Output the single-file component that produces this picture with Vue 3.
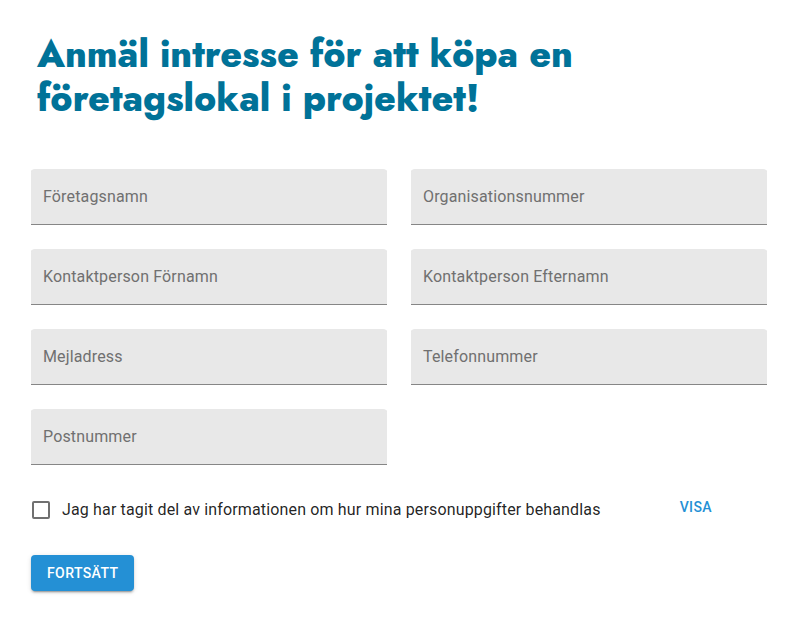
<template>
  <main class="page">
    <h1 class="title">Anmäl intresse för att köpa en företagslokal i projektet!</h1>

    <form class="form" @submit.prevent>
      <div class="fields">
        <div v-for="field in fields" :key="field.name" class="field">
          <input
            :id="field.name"
            v-model="form[field.name]"
            class="input"
            :type="field.type"
            placeholder=" "
          />
          <label class="label" :for="field.name">{{ field.label }}</label>
        </div>
      </div>

      <div class="consent">
        <label class="check">
          <input v-model="accepted" class="checkbox" type="checkbox" />
          <span>Jag har tagit del av informationen om hur mina personuppgifter behandlas</span>
        </label>
        <button class="show" type="button">Visa</button>
      </div>

      <button class="submit" type="submit">Fortsätt</button>
    </form>
  </main>
</template>

<script setup>
import { reactive, ref } from 'vue'

const fields = [
  { name: 'company', label: 'Företagsnamn', type: 'text' },
  { name: 'orgNumber', label: 'Organisationsnummer', type: 'text' },
  { name: 'firstName', label: 'Kontaktperson Förnamn', type: 'text' },
  { name: 'lastName', label: 'Kontaktperson Efternamn', type: 'text' },
  { name: 'email', label: 'Mejladress', type: 'email' },
  { name: 'phone', label: 'Telefonnummer', type: 'tel' },
  { name: 'zip', label: 'Postnummer', type: 'text' }
]

const form = reactive(Object.fromEntries(fields.map((f) => [f.name, ''])))
const accepted = ref(false)
</script>

<style>
body {
  margin: 0;
  background: #fff;
}
</style>

<style scoped>
.page {
  padding: 32px 29px 30px 31px;
  font-family: Roboto, sans-serif;
  font-size: 16px;
  letter-spacing: 0.15px;
  color: rgba(0, 0, 0, 0.87);
}
.title {
  max-width: 600px;
  margin: 0 0 49px;
  padding-left: 6px;
  font-family: Futura, 'Jost', Lato, sans-serif;
  font-size: 37px;
  line-height: 44px;
  font-weight: 800;
  font-variant-ligatures: none;
  letter-spacing: normal;
  color: #007298;
}
.fields {
  display: grid;
  grid-template-columns: 1fr 1fr;
  gap: 24px;
}
.field {
  position: relative;
  display: flex;
}
.input {
  box-sizing: border-box;
  width: 100%;
  height: 56px;
  padding: 20px 12px 4px;
  border: 0;
  border-radius: 4px 4px 0 0;
  background: #e8e8e8;
  box-shadow: inset 0 -1px #868686;
  font: inherit;
  color: inherit;
  outline: none;
}
.label {
  position: absolute;
  top: 16px;
  left: 12px;
  line-height: 24px;
  color: #707070;
  pointer-events: none;
  transform-origin: top left;
  transition: transform 0.2s;
}
.input:focus {
  box-shadow: inset 0 -2px #2490d5;
}
.input:focus + .label,
.input:not(:placeholder-shown) + .label {
  transform: translateY(-10px) scale(0.75);
}
.consent {
  display: flex;
  align-items: flex-start;
  justify-content: space-between;
  margin-top: 24px;
  padding-right: 47px;
}
.check {
  display: flex;
  align-items: center;
  gap: 12px;
  min-height: 42px;
  line-height: 24px;
  cursor: pointer;
}
.checkbox {
  appearance: none;
  box-sizing: border-box;
  width: 18px;
  height: 18px;
  margin: 0 0 0 1px;
  border: 2px solid #707070;
  border-radius: 2px;
}
.checkbox:checked {
  border-color: #2490d5;
  background: #2490d5;
}
.show,
.submit {
  height: 36px;
  border: 0;
  border-radius: 4px;
  font-family: inherit;
  font-size: 14px;
  font-weight: 500;
  letter-spacing: 0.4px;
  text-transform: uppercase;
  cursor: pointer;
}
.show {
  padding: 0 8px;
  background: none;
  color: #2490d5;
}
.submit {
  display: block;
  margin-top: 24px;
  padding: 0 16px;
  background: #2490d5;
  color: #fff;
  box-shadow: 0 3px 1px -2px rgba(0, 0, 0, 0.2), 0 2px 2px rgba(0, 0, 0, 0.14),
    0 1px 5px rgba(0, 0, 0, 0.12);
}
</style>
